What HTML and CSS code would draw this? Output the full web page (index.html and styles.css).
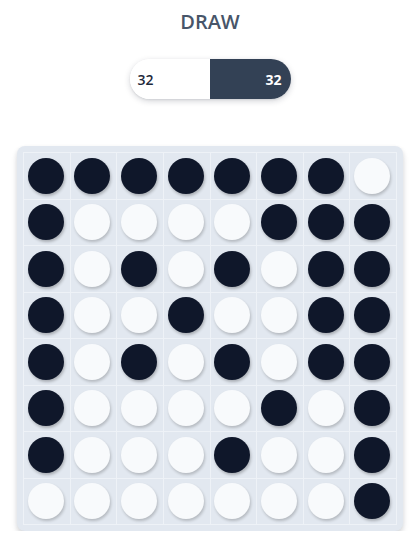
FILE: index.html
```html
<!DOCTYPE html>
<html>
<head>
<meta charset="utf-8">
<link rel="stylesheet" href="styles.css">
</head>
<body>
<main class="app">
  <h1 class="status">DRAW</h1>
  <div class="score">
    <div class="score-side score-light">32</div>
    <div class="score-side score-dark">32</div>
  </div>
  <div class="board">
    <div class="grid" id="grid">
      <div class="cell"><span class="disc b"></span></div><div class="cell"><span class="disc b"></span></div><div class="cell"><span class="disc b"></span></div><div class="cell"><span class="disc b"></span></div><div class="cell"><span class="disc b"></span></div><div class="cell"><span class="disc b"></span></div><div class="cell"><span class="disc b"></span></div><div class="cell"><span class="disc w"></span></div>
      <div class="cell"><span class="disc b"></span></div><div class="cell"><span class="disc w"></span></div><div class="cell"><span class="disc w"></span></div><div class="cell"><span class="disc w"></span></div><div class="cell"><span class="disc w"></span></div><div class="cell"><span class="disc b"></span></div><div class="cell"><span class="disc b"></span></div><div class="cell"><span class="disc b"></span></div>
      <div class="cell"><span class="disc b"></span></div><div class="cell"><span class="disc w"></span></div><div class="cell"><span class="disc b"></span></div><div class="cell"><span class="disc w"></span></div><div class="cell"><span class="disc b"></span></div><div class="cell"><span class="disc w"></span></div><div class="cell"><span class="disc b"></span></div><div class="cell"><span class="disc b"></span></div>
      <div class="cell"><span class="disc b"></span></div><div class="cell"><span class="disc w"></span></div><div class="cell"><span class="disc w"></span></div><div class="cell"><span class="disc b"></span></div><div class="cell"><span class="disc w"></span></div><div class="cell"><span class="disc w"></span></div><div class="cell"><span class="disc b"></span></div><div class="cell"><span class="disc b"></span></div>
      <div class="cell"><span class="disc b"></span></div><div class="cell"><span class="disc w"></span></div><div class="cell"><span class="disc b"></span></div><div class="cell"><span class="disc w"></span></div><div class="cell"><span class="disc b"></span></div><div class="cell"><span class="disc w"></span></div><div class="cell"><span class="disc b"></span></div><div class="cell"><span class="disc b"></span></div>
      <div class="cell"><span class="disc b"></span></div><div class="cell"><span class="disc w"></span></div><div class="cell"><span class="disc w"></span></div><div class="cell"><span class="disc w"></span></div><div class="cell"><span class="disc w"></span></div><div class="cell"><span class="disc b"></span></div><div class="cell"><span class="disc w"></span></div><div class="cell"><span class="disc b"></span></div>
      <div class="cell"><span class="disc b"></span></div><div class="cell"><span class="disc w"></span></div><div class="cell"><span class="disc w"></span></div><div class="cell"><span class="disc w"></span></div><div class="cell"><span class="disc b"></span></div><div class="cell"><span class="disc w"></span></div><div class="cell"><span class="disc w"></span></div><div class="cell"><span class="disc b"></span></div>
      <div class="cell"><span class="disc w"></span></div><div class="cell"><span class="disc w"></span></div><div class="cell"><span class="disc w"></span></div><div class="cell"><span class="disc w"></span></div><div class="cell"><span class="disc w"></span></div><div class="cell"><span class="disc w"></span></div><div class="cell"><span class="disc w"></span></div><div class="cell"><span class="disc b"></span></div>
    </div>
  </div>
</main>
</body>
</html>
```

FILE: styles.css
```css
* { box-sizing: border-box; }
html, body { margin: 0; padding: 0; background: #ffffff; }
body { font-family: "Open Sans", "Noto Sans", sans-serif; }

.app {
  display: flex;
  flex-direction: column;
  align-items: center;
  padding-top: 8px;
}

.status {
  margin: 0;
  font-size: 20px;
  line-height: 28px;
  font-weight: 600;
  color: #475569;
  letter-spacing: 0;
}

.score {
  margin-top: 23px;
  width: 161px;
  height: 40px;
  display: flex;
  border-radius: 20px;
  overflow: hidden;
  box-shadow: 0 2px 6px rgba(15, 23, 42, 0.18), 0 1px 2px rgba(15, 23, 42, 0.08);
}

.score-side {
  flex: 1;
  display: flex;
  align-items: center;
  font-size: 14px;
  font-weight: 600;
}

.score-light {
  background: #ffffff;
  color: #1e293b;
  padding-left: 8px;
}

.score-dark {
  background: #334155;
  color: #ffffff;
  font-weight: 700;
  justify-content: flex-end;
  padding-right: 9px;
}

.board {
  margin-top: 47px;
  width: 386px;
  height: 385px;
  padding: 6px;
  background: #e2e8f0;
  border-radius: 8px;
  box-shadow: 0 4px 6px rgba(15, 23, 42, 0.12), 0 2px 4px rgba(15, 23, 42, 0.08);
}

.grid {
  width: 100%;
  height: 100%;
  display: grid;
  grid-template-columns: repeat(8, 1fr);
  grid-template-rows: repeat(8, 1fr);
  gap: 1px;
  padding: 1px;
  background: #eef2f7;
}

.cell {
  background: #e2e8f0;
  display: flex;
  align-items: center;
  justify-content: center;
}

.disc {
  width: 36px;
  height: 36px;
  border-radius: 50%;
  margin-right: 2px;
}

.disc.b {
  background: #0f172a;
  box-shadow: 1px 2px 3px rgba(0, 0, 0, 0.25);
}

.disc.w {
  background: #f8fafc;
  box-shadow: 1px 2px 3px rgba(0, 0, 0, 0.2);
}
```
